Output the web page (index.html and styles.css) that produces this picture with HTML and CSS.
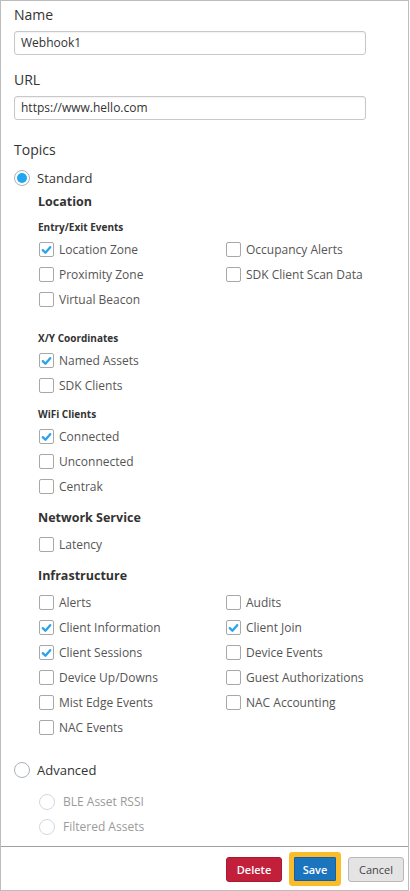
FILE: index.html
```html
<!DOCTYPE html>
<html>
<head>
<meta charset="utf-8">
<link rel="stylesheet" href="styles.css">
</head>
<body>
<div class="panel">
  <div class="content">
    <div class="field">
      <div class="label">Name</div>
      <div class="input">Webhook1</div>
    </div>
    <div class="field">
      <div class="label">URL</div>
      <div class="input">https://www.hello.com</div>
    </div>
    <div class="label topics">Topics</div>
    <div class="radio-row">
      <span class="radio on"></span><span class="radio-text">Standard</span>
    </div>
    <div class="section">
      <div class="sec-title first">Location</div>
      <div class="group g-entry">
        <div class="sub-title">Entry/Exit Events</div>
        <div class="grid">
          <div class="cb-row"><span class="cb on"><svg viewBox="0 0 14 14"><path d="M3 7.2 L5.8 10 L11 4"/></svg></span><span class="cb-text">Location Zone</span></div>
          <div class="cb-row"><span class="cb"></span><span class="cb-text">Occupancy Alerts</span></div>
          <div class="cb-row"><span class="cb"></span><span class="cb-text">Proximity Zone</span></div>
          <div class="cb-row"><span class="cb"></span><span class="cb-text">SDK Client Scan Data</span></div>
          <div class="cb-row"><span class="cb"></span><span class="cb-text">Virtual Beacon</span></div>
        </div>
      </div>
      <div class="group g-xy">
        <div class="sub-title">X/Y Coordinates</div>
        <div class="cb-row"><span class="cb on"><svg viewBox="0 0 14 14"><path d="M3 7.2 L5.8 10 L11 4"/></svg></span><span class="cb-text">Named Assets</span></div>
        <div class="cb-row"><span class="cb"></span><span class="cb-text">SDK Clients</span></div>
      </div>
      <div class="group">
        <div class="sub-title">WiFi Clients</div>
        <div class="cb-row"><span class="cb on"><svg viewBox="0 0 14 14"><path d="M3 7.2 L5.8 10 L11 4"/></svg></span><span class="cb-text">Connected</span></div>
        <div class="cb-row"><span class="cb"></span><span class="cb-text">Unconnected</span></div>
        <div class="cb-row"><span class="cb"></span><span class="cb-text">Centrak</span></div>
      </div>
      <div class="sec-title">Network Service</div>
      <div class="group g-ns">
        <div class="cb-row"><span class="cb"></span><span class="cb-text">Latency</span></div>
      </div>
      <div class="sec-title">Infrastructure</div>
      <div class="group g-infra">
        <div class="grid">
          <div class="cb-row"><span class="cb"></span><span class="cb-text">Alerts</span></div>
          <div class="cb-row"><span class="cb"></span><span class="cb-text">Audits</span></div>
          <div class="cb-row"><span class="cb on"><svg viewBox="0 0 14 14"><path d="M3 7.2 L5.8 10 L11 4"/></svg></span><span class="cb-text">Client Information</span></div>
          <div class="cb-row"><span class="cb on"><svg viewBox="0 0 14 14"><path d="M3 7.2 L5.8 10 L11 4"/></svg></span><span class="cb-text">Client Join</span></div>
          <div class="cb-row"><span class="cb on"><svg viewBox="0 0 14 14"><path d="M3 7.2 L5.8 10 L11 4"/></svg></span><span class="cb-text">Client Sessions</span></div>
          <div class="cb-row"><span class="cb"></span><span class="cb-text">Device Events</span></div>
          <div class="cb-row"><span class="cb"></span><span class="cb-text">Device Up/Downs</span></div>
          <div class="cb-row"><span class="cb"></span><span class="cb-text">Guest Authorizations</span></div>
          <div class="cb-row"><span class="cb"></span><span class="cb-text">Mist Edge Events</span></div>
          <div class="cb-row"><span class="cb"></span><span class="cb-text">NAC Accounting</span></div>
          <div class="cb-row"><span class="cb"></span><span class="cb-text">NAC Events</span></div>
        </div>
      </div>
    </div>
    <div class="radio-row adv">
      <span class="radio"></span><span class="radio-text">Advanced</span>
    </div>
    <div class="section">
      <div class="sub-radio"><span class="radio dis"></span><span class="dis-text">BLE Asset RSSI</span></div>
      <div class="sub-radio"><span class="radio dis"></span><span class="dis-text">Filtered Assets</span></div>
    </div>
  </div>
  <div class="footer">
    <button class="btn delete">Delete</button>
    <button class="btn save">Save</button>
    <button class="btn cancel">Cancel</button>
  </div>
</div>
</body>
</html>
```

FILE: styles.css
```css
* { box-sizing: border-box; }
html, body { margin: 0; padding: 0; background: #fff; }
body { font-family: "Open Sans", "Noto Sans", sans-serif; color: #333; }

.panel {
  width: 409px;
  height: 891px;
  border: 1px solid #bdbdbd;
  display: flex;
  flex-direction: column;
}
.content {
  flex: 1;
  padding: 4px 0 0 13px;
}
.label {
  font-size: 14px;
  line-height: 20px;
  color: #333;
}
.field { margin-bottom: 15px; }
.field .label { margin-bottom: 6px; }
.input {
  width: 352px;
  height: 24px;
  border: 1px solid #c8c8c8;
  border-radius: 3px;
  box-shadow: inset 0 1px 2px rgba(0,0,0,0.06);
  font-size: 12px;
  line-height: 22px;
  padding-left: 6px;
  color: #333;
}
.topics { margin-top: 20px; }
.radio-row {
  display: flex;
  align-items: center;
  height: 20px;
  margin-top: 8px;
}
.radio-row.adv { margin-top: 20px; }
.radio {
  width: 16px;
  height: 16px;
  border: 1px solid #a9b1ba;
  border-radius: 50%;
  flex: none;
  position: relative;
  background: #fff;
}
.radio.on::after {
  content: "";
  position: absolute;
  left: 2px;
  top: 2px;
  width: 10px;
  height: 10px;
  border-radius: 50%;
  background: #1ea7f0;
}
.radio.dis { border-color: #d3d8de; }
.radio-text {
  margin-left: 7px;
  font-size: 13px;
  color: #333;
}
.section { padding-left: 24px; }
.sec-title {
  font-size: 12.5px;
  font-weight: 700;
  line-height: 20px;
  color: #333;
  margin-top: 9px;
}
.sec-title.first { margin-top: 4px; }
.sub-title {
  font-size: 10px;
  font-weight: 700;
  line-height: 16px;
  color: #333;
  margin-bottom: 2px;
}
.g-entry { margin-top: 7px; margin-bottom: 18px; }
.g-xy { margin-bottom: 8px; }
.g-ns { margin-top: 4px; }
.g-infra { margin-top: 4px; }
.grid {
  display: grid;
  grid-template-columns: 187px 1fr;
}
.cb-row {
  display: flex;
  align-items: center;
  height: 25px;
  padding-left: 1px;
}
.cb {
  width: 15px;
  height: 15px;
  border: 1px solid #a8a8a8;
  border-radius: 2px;
  background: #fff;
  flex: none;
  display: flex;
  align-items: center;
  justify-content: center;
}
.cb svg { width: 14px; height: 14px; }
.cb svg path {
  fill: none;
  stroke: #2aa3ec;
  stroke-width: 2.5;
  stroke-linecap: round;
  stroke-linejoin: round;
}
.cb-text {
  margin-left: 5px;
  font-size: 12px;
  color: #555;
}
.sub-radio {
  display: flex;
  align-items: center;
  height: 25px;
  padding-left: 1px;
}
.sub-radio:first-child { margin-top: 9px; }
.dis-text {
  margin-left: 8px;
  font-size: 12px;
  color: #9a9a9a;
}
.footer {
  border-top: 1px solid #a0a0a0;
  height: 44px;
  display: flex;
  justify-content: flex-end;
  align-items: flex-start;
  padding: 10px 4px 0 0;
  gap: 12px;
}
.btn {
  font-family: "Open Sans", "Noto Sans", sans-serif;
  font-size: 11px;
  height: 25px;
  border-radius: 3px;
  padding: 0;
  cursor: pointer;
}
.delete {
  width: 56px;
  background: #c21f3b;
  border: 1px solid #a81a33;
  color: #fff;
  font-weight: 600;
}
.save {
  width: 42px;
  height: 24px;
  background: #1b74be;
  border: 1px solid #16609e;
  color: #fff;
  font-weight: 600;
  border-radius: 1px;
  box-shadow: 0 0 0 5px #fbbc2c;
}
.cancel {
  width: 56px;
  background: #e4e4e4;
  border: 1px solid #b8b8b8;
  color: #444;
}
```
